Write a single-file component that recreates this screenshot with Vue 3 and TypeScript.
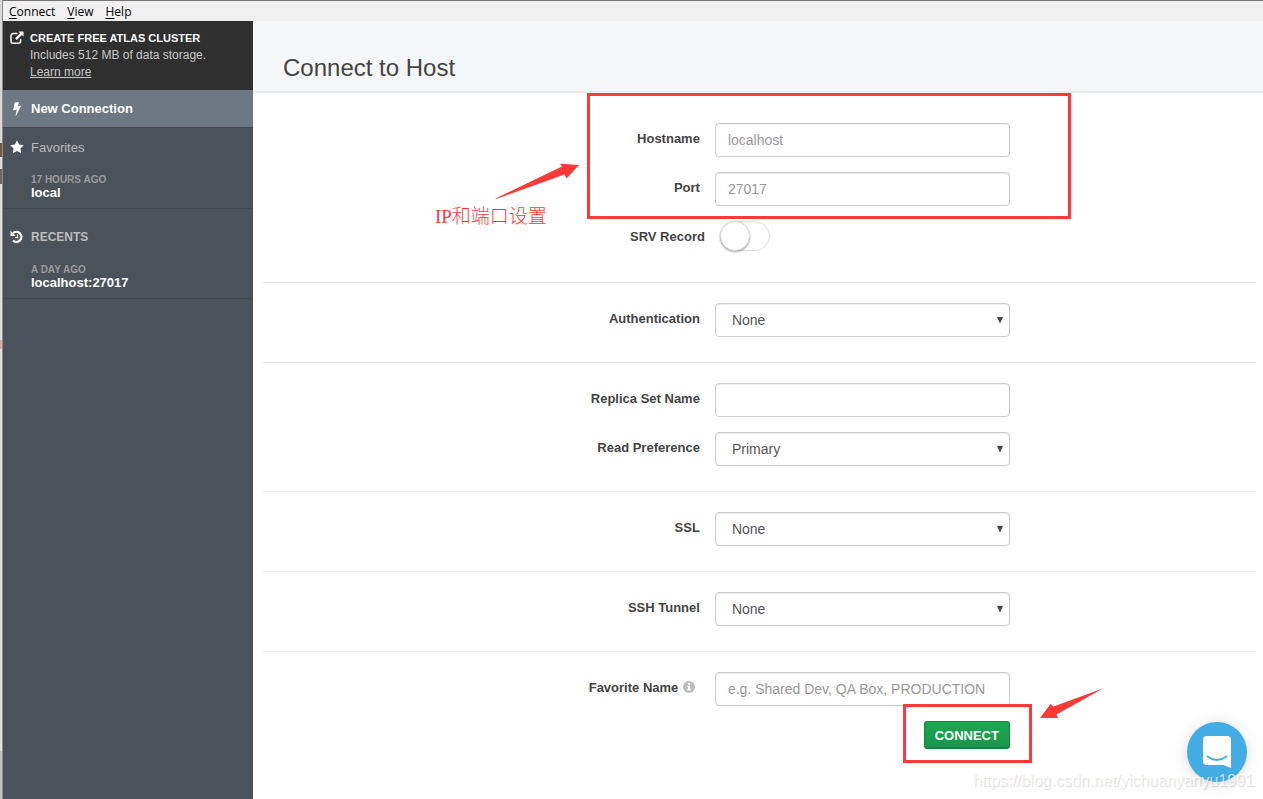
<script setup lang="ts">
import { ref } from 'vue'

interface Field {
  id: string
  label: string
  kind: 'text' | 'select' | 'toggle'
  placeholder?: string
  options?: string[]
  info?: boolean
  marked?: boolean
}

const menus: string[] = ['Connect', 'View', 'Help']

const sections: Field[][] = [
  [
    { id: 'hostname', label: 'Hostname', kind: 'text', placeholder: 'localhost', marked: true },
    { id: 'port', label: 'Port', kind: 'text', placeholder: '27017' },
    { id: 'srv', label: 'SRV Record', kind: 'toggle' },
  ],
  [{ id: 'auth', label: 'Authentication', kind: 'select', options: ['None', 'Username / Password', 'X.509'] }],
  [
    { id: 'replica', label: 'Replica Set Name', kind: 'text', placeholder: '' },
    { id: 'readpref', label: 'Read Preference', kind: 'select', options: ['Primary', 'Secondary', 'Nearest'] },
  ],
  [{ id: 'ssl', label: 'SSL', kind: 'select', options: ['None', 'System CA'] }],
  [{ id: 'ssh', label: 'SSH Tunnel', kind: 'select', options: ['None', 'Use Password'] }],
  [
    {
      id: 'favorite',
      label: 'Favorite Name',
      kind: 'text',
      placeholder: 'e.g. Shared Dev, QA Box, PRODUCTION',
      info: true,
    },
  ],
]

const text = ref<Record<string, string>>({ hostname: '', port: '', replica: '', favorite: '' })
const choice = ref<Record<string, string>>({ auth: 'None', readpref: 'Primary', ssl: 'None', ssh: 'None' })
const srv = ref(false)
</script>

<template>
  <div class="desktop">
    <div class="fringe"></div>
    <div class="window">
      <nav class="menubar">
        <button v-for="m in menus" :key="m" type="button"><u>{{ m[0] }}</u>{{ m.slice(1) }}</button>
      </nav>
      <div class="body">
        <aside class="sidebar">
          <div class="atlas">
            <svg class="icon" viewBox="0 0 14 14" width="14" height="14">
              <path d="M7.500 2.600H3A2 2 0 0 0 1 4.600v5.600a2 2 0 0 0 2 2h5.600a2 2 0 0 0 2-2V8" fill="none" stroke="currentColor" stroke-width="1.500" />
              <path d="M8.500.5h5v5L11.800 3.900 6.800 8.900 5.100 7.200l5-5z" fill="currentColor" />
            </svg>
            <div>
              <strong>CREATE FREE ATLAS CLUSTER</strong>
              <p>Includes 512 MB of data storage.</p>
              <a href="#">Learn more</a>
            </div>
          </div>
          <button class="new" type="button">
            <svg class="icon" viewBox="0 0 14 14" width="14" height="14">
              <path d="M4.800.3h4.200L7.800 4.300l3.400-.7L6.100 13.700H5.500l1.300-6.200-3.800.9z" fill="currentColor" />
            </svg>
            <span>New Connection</span>
          </button>
          <section class="group">
            <h2>
              <svg class="icon" viewBox="0 0 14 14" width="14" height="14">
                <path d="M7 .3l2.100 4.300 4.700.7-3.400 3.300.8 4.700L7 11.100l-4.200 2.200.8-4.700L.2 5.300l4.700-.7z" fill="currentColor" />
              </svg>
              <span>Favorites</span>
            </h2>
            <button class="entry" type="button"><small>17 HOURS AGO</small><span>local</span></button>
          </section>
          <section class="group recents">
            <h2>
              <svg class="icon" viewBox="0 0 14 14" width="14" height="14">
                <path d="M3 3.200A5 5 0 1 1 3 10.600" fill="none" stroke="currentColor" stroke-width="2.300" />
                <path d="M.5.800v5.200h5.200z" fill="currentColor" />
                <path d="M7.500 4.300v3.300H4.900" fill="none" stroke="currentColor" stroke-width="1.300" />
              </svg>
              <span class="caps">RECENTS</span>
            </h2>
            <button class="entry" type="button"><small>A DAY AGO</small><span>localhost:27017</span></button>
          </section>
        </aside>
        <main class="main">
          <header class="title"><h1>Connect to Host</h1></header>
          <form class="form" @submit.prevent>
            <div v-for="(fields, i) in sections" :key="i" class="section">
              <div v-for="f in fields" :key="f.id" class="row" :class="f.kind">
                <label :for="f.id">
                  {{ f.label }}
                  <svg v-if="f.info" class="info" viewBox="0 0 12 12" width="12" height="12">
                    <circle cx="6" cy="6" r="6" fill="#bdbdbb" />
                    <path d="M5 2h2v1.700H5zM4.300 4.800H7v3.400h.8v1.300H4.300V8.200h.8V6.100h-.8z" fill="#fff" />
                  </svg>
                </label>
                <div class="field">
                  <input v-if="f.kind === 'text'" :id="f.id" v-model="text[f.id]" type="text" :placeholder="f.placeholder" />
                  <template v-else-if="f.kind === 'select'">
                    <select :id="f.id" v-model="choice[f.id]">
                      <option v-for="o in f.options" :key="o">{{ o }}</option>
                    </select>
                    <svg class="caret" viewBox="0 0 6 7" width="6" height="7"><path d="M0 0h6L3 6.500z" fill="#444" /></svg>
                  </template>
                  <input v-else :id="f.id" v-model="srv" class="switch" type="checkbox" />
                  <template v-if="f.marked">
                    <div class="mark mark-host"></div>
                    <svg class="arrow-host" viewBox="0 0 85 37" width="85" height="37">
                      <path d="M.5 35.500L67 3.500 65 .8 84 2 71.500 15.500 69.500 11.500 1 36z" fill="#fd3a38" />
                    </svg>
                    <span class="note">IP和端口设置</span>
                  </template>
                </div>
              </div>
            </div>
            <div class="row actions">
              <div class="field">
                <div class="submit">
                  <button type="submit">CONNECT</button>
                  <div class="mark mark-connect"></div>
                  <svg class="arrow-connect" viewBox="0 0 64 31" width="64" height="31">
                    <path d="M63.500.3L13.500 18.500 10.500 16 0 30h18l-1.500-3.500z" fill="#fd3a38" />
                  </svg>
                </div>
              </div>
            </div>
          </form>
        </main>
      </div>
    </div>
    <button class="chat" type="button" aria-label="Open chat">
      <svg viewBox="0 0 28 32" width="28" height="32">
        <path d="M4 0h20a4 4 0 0 1 4 4v28l-7.500-3H4a4 4 0 0 1-4-4V4a4 4 0 0 1 4-4z" fill="#fff" />
        <path d="M4.500 20.500q9.500 7 19 0" fill="none" stroke="#43aee5" stroke-width="1.800" stroke-linecap="round" />
      </svg>
    </button>
    <span class="watermark">https://blog.csdn.net/yichuanyanyu1991</span>
  </div>
</template>

<style>
body {
  margin: 0;
}
</style>

<style scoped>
*,
*::before {
  box-sizing: border-box;
}
.desktop {
  position: relative;
  display: flex;
  min-height: 100vh;
  font-family: "Liberation Sans", Arial, sans-serif;
  font-size: 13px;
  color: #444;
  overflow: hidden;
}
button,
input,
select {
  font: inherit;
}
h1,
h2,
p {
  margin: 0;
  font-weight: normal;
}
.fringe {
  width: 2px;
  background: linear-gradient(#d8d8d6 143px, #7a5a3c 143px 157px, #dcdcda 157px 169px, #6d6463 169px 184px, #dfdfdc 184px 340px, #dfa9a5 340px 349px, #dfdfdc 349px 751px, #c2c2c0 751px);
}
.window {
  flex: 1;
  display: flex;
  flex-direction: column;
  border-top: 1px solid #787375;
  border-left: 1px solid #8b8b8b;
}
.menubar {
  display: flex;
  gap: 12px;
  height: 20px;
  padding: 1px 6px 0;
  background: #f0f0f0;
}
.menubar button {
  padding: 0;
  border: 0;
  background: none;
  font-family: "Open Sans", "Noto Sans", sans-serif;
  font-size: 12px;
  line-height: 20px;
  color: #000;
}
.menubar u {
  text-underline-offset: 2px;
}
.body {
  flex: 1;
  display: flex;
}
.sidebar {
  width: 250px;
  flex: none;
  background: #4c525a;
  color: #fff;
}
.icon {
  flex: none;
}
.atlas {
  display: flex;
  gap: 6px;
  height: 69px;
  padding: 9px 7px;
  background: #2f2f2f;
  font-size: 12px;
  line-height: 17px;
  color: #c8c8c8;
}
.atlas .icon {
  margin-top: 1px;
  color: #fff;
}
.atlas strong {
  display: block;
  font-size: 11px;
  color: #fff;
}
.atlas a {
  color: inherit;
}
.new {
  display: flex;
  align-items: center;
  gap: 7px;
  width: 100%;
  height: 38px;
  padding: 0 7px;
  border: 0;
  border-bottom: 1px solid #434950;
  background: #6c7883;
  color: #fff;
  font-size: 13px;
  font-weight: bold;
}
.group {
  padding-top: 9px;
  border-bottom: 1px solid #42474e;
}
.recents {
  padding-top: 18px;
}
.group h2 {
  display: flex;
  align-items: center;
  gap: 7px;
  height: 20px;
  padding: 0 7px;
  font-size: 13px;
}
.group h2 span {
  color: #bbb;
}
.group .caps {
  font-size: 12px;
  font-weight: bold;
}
.entry {
  display: block;
  width: 100%;
  padding: 17px 28px 8px;
  border: 0;
  background: none;
  color: #fff;
  text-align: left;
  font-size: 13px;
  font-weight: bold;
  line-height: 14px;
}
.entry small,
.entry span {
  display: block;
}
.entry small {
  font-size: 10px;
  line-height: 12px;
  color: #9b9b99;
}
.main {
  flex: 1;
  min-width: 0;
  background: #fff;
}
.title {
  height: 72px;
  padding: 32px 30px 0;
  background: #f5f6f7;
  border-bottom: 2px solid #e8eaec;
}
.title h1 {
  font-size: 24px;
  line-height: 30px;
}
.form {
  padding: 10px 7px 0 10px;
}
.section {
  padding: 20px 0 10px;
  border-bottom: 1px solid #ebebeb;
}
.section:nth-last-child(2) {
  padding-bottom: 0;
  border-bottom: 0;
}
.row {
  display: grid;
  grid-template-columns: 44% minmax(0, 295px);
  column-gap: 15px;
  margin-bottom: 15px;
}
.row > label {
  text-align: right;
  font-size: 13px;
  font-weight: bold;
  line-height: 31px;
}
.info {
  margin: 0 5px 0 1px;
  vertical-align: -1px;
}
.field {
  position: relative;
}
.row.toggle {
  min-height: 36px;
  grid-template-columns: calc(44% + 5px) minmax(0, 290px);
}
.text input,
.select select {
  display: block;
  width: 100%;
  height: 34px;
  padding: 0 12px;
  border: 1px solid #ccc;
  border-radius: 4px;
  background: #fff;
  box-shadow: inset 0 1px 1px rgba(0, 0, 0, 0.075);
  font-size: 14px;
  color: #555;
  outline: 0;
}
.text input::placeholder {
  color: #999;
}
.select select {
  appearance: none;
  padding: 0 16px;
}
.caret {
  position: absolute;
  right: 7px;
  top: 14px;
  pointer-events: none;
}
.switch {
  appearance: none;
  display: block;
  width: 50px;
  height: 30px;
  margin: 0;
  border: 1px solid #ddd;
  border-radius: 15px;
  background: #fff;
}
.switch::before {
  content: "";
  display: block;
  width: 30px;
  height: 30px;
  margin: -1px;
  border-radius: 50%;
  background: #fff;
  border: 1px solid #ddd;
  box-shadow: 0 1px 2px rgba(0, 0, 0, 0.4);
}
.switch:checked::before {
  margin-left: 19px;
}
.actions .field {
  grid-column: 2;
  display: flex;
  justify-content: flex-end;
}
.submit {
  position: relative;
}
.submit button {
  display: block;
  height: 28px;
  padding: 1px 10px 0;
  border: 1px solid #168243;
  border-bottom-width: 2px;
  border-radius: 3px;
  background: linear-gradient(#17a951, #1b964b);
  color: #fff;
  font-size: 13px;
  font-weight: bold;
}
.mark {
  position: absolute;
  border: 3px solid #fd3a38;
  pointer-events: none;
}
.mark-host {
  left: -128px;
  top: -30px;
  width: 484px;
  height: 126px;
}
.arrow-host {
  position: absolute;
  left: -220px;
  top: 40px;
}
.note {
  position: absolute;
  left: -280px;
  top: 81px;
  font-family: "Liberation Serif", "Noto Sans CJK SC", serif;
  font-size: 19px;
  font-weight: 300;
  line-height: 26px;
  white-space: nowrap;
  color: #fd3a38;
}
.mark-connect {
  right: -22px;
  top: -17px;
  width: 129px;
  height: 59px;
}
.arrow-connect {
  position: absolute;
  right: -94px;
  top: -33px;
}
.chat {
  position: absolute;
  right: 16px;
  bottom: 17px;
  display: grid;
  place-items: center;
  width: 60px;
  height: 60px;
  padding: 0;
  border: 0;
  border-radius: 50%;
  background: #43aee5;
  box-shadow: 0 2px 16px rgba(0, 0, 0, 0.15);
}
.watermark {
  position: absolute;
  right: 9px;
  bottom: 8px;
  font-size: 16px;
  line-height: 20px;
  color: rgba(255, 255, 255, 0.7);
  text-shadow: 1px 1px 1px rgba(0, 0, 0, 0.15);
  pointer-events: none;
}
</style>
